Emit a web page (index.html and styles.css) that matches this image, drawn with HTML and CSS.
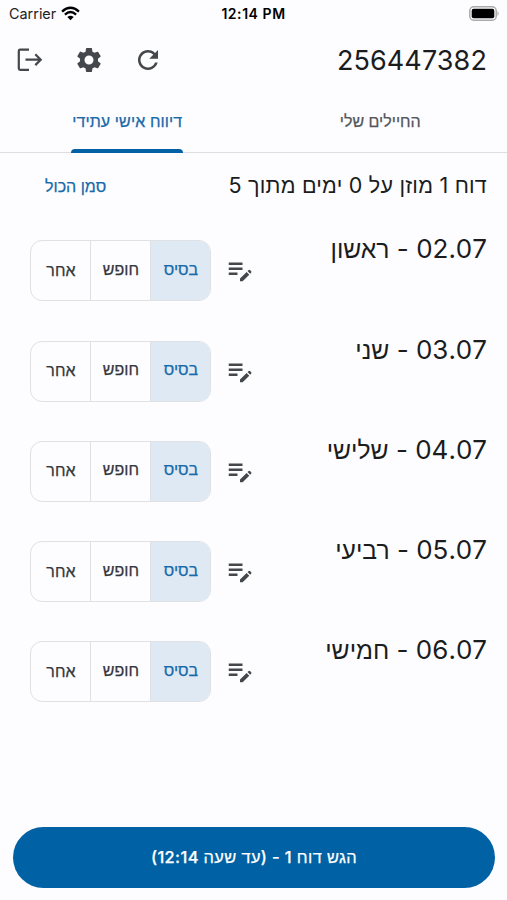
FILE: index.html
```
<!DOCTYPE html>
<html lang="he" dir="rtl">
<head>
<meta charset="utf-8">
<title>דיווח אישי</title>
<link rel="stylesheet" href="styles.css">
</head>
<body>
<div class="status" dir="ltr">
  <div class="carrier"><span>Carrier</span>
    <svg width="19" height="15" viewBox="0 0 18 14"><path d="M1 5.2Q9-2 17 5.2M3.7 8Q9 3.2 14.3 8" fill="none" stroke="#000" stroke-width="2.2"/><path d="M6 10.3Q9 7.8 12 10.3L9 13.3Z"/></svg>
  </div>
  <b class="clock">12:14 PM</b>
  <svg class="battery" width="31" height="15" viewBox="0 0 31 15"><rect x=".8" y=".8" width="26.4" height="13.4" rx="4" fill="none" stroke="#aaa" stroke-width="1.5"/><rect x="2.7" y="2.7" width="22.6" height="9.6" rx="2"/><path d="M28.5 5Q31 7.5 28.5 10Z" fill="#aaa"/></svg>
</div>
<header class="header">
  <h1>256447382</h1>
  <div class="actions" dir="ltr">
    <svg width="30" height="30" viewBox="0 0 30 30"><path d="M14 4.7H5.2Q3.8 4.7 3.8 6v17.5Q3.8 24.8 5.2 24.8H14M10.500 14.700h15.700M20.300 9.300l5.400 5.400-5.400 5.400" fill="none" stroke="#44474b" stroke-width="2.2"/></svg>
    <svg width="30" height="30" viewBox="0 0 24 24"><path fill="#44474b" d="M19.14 12.94c.04-.3.06-.61.06-.94s-.02-.64-.07-.94l2.03-1.58c.18-.14.23-.41.12-.61l-1.92-3.32c-.12-.22-.37-.29-.59-.22l-2.39.96c-.5-.38-1.03-.7-1.62-.94L14.4 2.81c-.04-.24-.24-.41-.48-.41h-3.84c-.24 0-.43.17-.47.41l-.36 2.54c-.59.24-1.13.57-1.62.94l-2.39-.96c-.22-.08-.47 0-.59.22L2.74 8.87c-.12.21-.08.47.12.61l2.03 1.58c-.05.3-.09.63-.09.94s.02.64.07.94l-2.03 1.58c-.18.14-.23.41-.12.61l1.92 3.32c.12.22.37.29.59.22l2.39-.96c.5.38 1.03.7 1.62.94l.36 2.54c.05.24.24.41.48.41h3.84c.24 0 .44-.17.47-.41l.36-2.54c.59-.24 1.13-.56 1.62-.94l2.39.96c.22.08.47 0 .59-.22l1.92-3.32c.12-.22.07-.47-.12-.61zM12 15.6A3.6 3.6 0 1 1 12 8.4a3.6 3.6 0 0 1 0 7.2z"/></svg>
    <svg width="30" height="30" viewBox="0 0 24 24"><path fill="#44474b" d="M17.65 6.35A8 8 0 1 0 19.73 14h-2.08A6 6 0 1 1 12 6c1.66 0 3.14.69 4.22 1.78L13 11h7V4z"/></svg>
  </div>
</header>
<nav class="tabs"><div class="tab"><span>החיילים שלי</span></div><div class="tab active"><span>דיווח אישי עתידי</span></div></nav>
<div class="summary"><span class="count">דוח 1 מוזן על 0 ימים מתוך 5</span><span class="all">סמן הכול</span></div>
<main id="days"></main>
<footer><button class="submit">הגש דוח 1 - (עד שעה 12:14)</button></footer>
<script src="app.js"></script>
</body>
</html>
```
FILE: app.js
```
const days = [['02.07', 'ראשון'], ['03.07', 'שני'], ['04.07', 'שלישי'], ['05.07', 'רביעי'], ['06.07', 'חמישי']];
document.getElementById('days').innerHTML = days.map(([date, name]) => `
  <section class="day">
    <h2><span class="date">${date} - </span>${name}</h2>
    <svg class="edit" width="30" height="30" viewBox="0 0 24 24"><path fill="#44474b" d="M3 10h11v2H3zM3 6h11v2H3zM3 14h7v2H3zM18.01 12.87l.71-.71a1 1 0 0 1 1.41 0l.71.71a1 1 0 0 1 0 1.41l-.71.71zM17.3 13.58l-5.3 5.3V21h2.12l5.3-5.3z"/></svg>
    <div class="options"><span class="option selected">בסיס</span><span class="option">חופש</span><span class="option last">אחר</span></div>
  </section>`).join('');
```
FILE: styles.css
```
* { box-sizing: border-box; }
body { margin: 0; height: 900px; display: flex; flex-direction: column; background: #fdfcff; color: #1a1c1e; font-family: Inter, "Liberation Sans", sans-serif; }
svg { display: block; flex: none; }
.status { height: 28px; display: grid; grid-template-columns: 1fr auto 1fr; align-items: center; padding: 0 7px 2px 9px; color: #000; font: 14.4px Inter, sans-serif; }
.carrier { display: flex; gap: 5px; align-items: center; color: #222; }
.clock { font-size: 14px; font-weight: 600; letter-spacing: .55px; margin-right: 2px; }
.battery { justify-self: end; }
.header { height: 64px; display: flex; align-items: center; justify-content: space-between; padding: 0 20px 0 15px; }
h1 { margin: 0; font: 400 27px Inter, sans-serif; letter-spacing: .1px; }
.actions { display: flex; gap: 29px; }
.tabs { height: 61px; display: grid; grid-template-columns: 1fr 1fr; border-bottom: 1px solid #dcdde0; }
.tab { display: flex; justify-content: center; font-size: 16px; color: #53565b; -webkit-text-stroke: .25px; }
.tab span { height: 61px; line-height: 59px; }
.tab.active { color: #1769aa; padding-left: 1px; }
.active span { position: relative; letter-spacing: .1px; }
.active span::after { content: ""; position: absolute; left: -1px; right: -1px; bottom: 0; height: 4px; border-radius: 4px 4px 0 0; background: #0061a4; }
.summary { height: 67px; display: flex; justify-content: space-between; align-items: center; padding: 0 20px 2px 45px; }
.count { font-size: 21.5px; letter-spacing: .22px; }
.all { font-size: 16px; color: #1769aa; -webkit-text-stroke: .25px; }
.day { height: 100.25px; display: flex; align-items: flex-start; padding: 20.4px 20px 0 30.4px; }
h2 { margin: -8px 0 0; flex: 1; font-size: 24.7px; font-weight: 400; line-height: 34px; white-space: pre; }
.date { font-size: 26px; }
.edit { margin: 15px 0 0 14px; }
.options { display: flex; width: 181px; height: 61px; border: 1px solid #dfe1e5; border-radius: 12px; overflow: hidden; }
.option { flex: 1; display: flex; align-items: center; justify-content: center; padding-bottom: 4px; font-size: 16px; color: #34373b; border-right: 1px solid #dfe1e5; -webkit-text-stroke: .25px; }
.option.selected { background: #dee9f4; color: #1769aa; border: 0; }
.option.last { padding-bottom: 2px; }
footer { margin-top: auto; padding: 0 12px 12px 13px; }
.submit { width: 100%; height: 61px; padding: 0 0 2px; border: 0; border-radius: 31px; background: #0061a4; color: #fff; font: 500 16.4px Inter, "Liberation Sans", sans-serif; letter-spacing: .4px; -webkit-text-stroke: .25px; }
```
